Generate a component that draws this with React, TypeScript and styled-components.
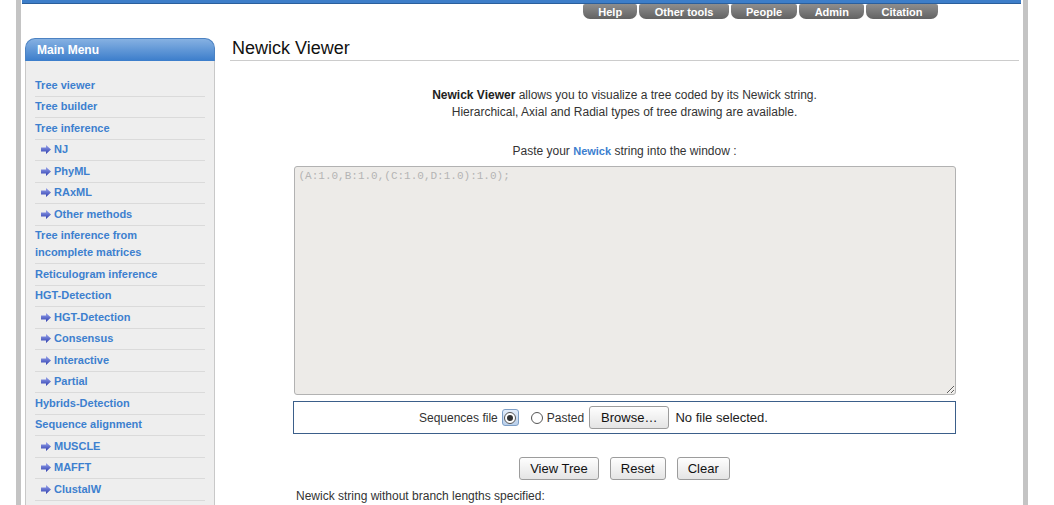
import React from "react";
import styled, { createGlobalStyle } from "styled-components";

const Global = createGlobalStyle`
  html, body { margin: 0; padding: 0; background: #fff; }
  body { font-family: "Liberation Sans", Arial, sans-serif; color: #333; }
  * { box-sizing: border-box; }
`;

const Page = styled.div`
  margin-left: 16px;
  width: 1012px;
  min-height: 505px;
  border-left: 5px solid #c4c4c4;
  border-right: 5px solid #c4c4c4;
  padding: 0 2px 0 1px;
`;

const TopBar = styled.div`
  height: 4px;
  background: #3d7ec9;
  border-bottom: 1px solid #2b5f9c;
`;

const Tabs = styled.nav`
  display: flex;
  gap: 2px;
  padding-left: 561px;
`;

const Tab = styled.a`
  display: block;
  height: 15px;
  line-height: 16px;
  padding: 0 15.3px;
  font-size: 11px;
  font-weight: bold;
  color: #fff;
  text-decoration: none;
  background: linear-gradient(#8e8e8e, #626262);
  border-radius: 2px 2px 7px 7px;
`;

const Main = styled.div`
  display: flex;
  align-items: flex-start;
  margin-top: 19px;
`;

const Sidebar = styled.aside`
  width: 190px;
  margin-left: 3px;
  flex-shrink: 0;
`;

const MenuHeader = styled.div`
  height: 23px;
  line-height: 23px;
  padding-left: 11px;
  color: #fff;
  font-size: 12px;
  font-weight: bold;
  background: linear-gradient(#86b1e2, #3b7dcb);
  border: 1px solid #4c82c2;
  border-bottom: none;
  border-radius: 10px 10px 0 0;
`;

const MenuBody = styled.ul`
  list-style: none;
  margin: 0;
  padding: 14px 9px 0 9px;
  background: #eeeeee;
  border-left: 1px solid #c8c8c8;
  border-right: 1px solid #c8c8c8;
  min-height: 444px;
`;

const MenuItem = styled.li<{ $sub?: boolean }>`
  display: flex;
  align-items: center;
  padding: 1.76px 0 1.76px ${(p) => (p.$sub ? "6px" : "0")};
  border-bottom: 1px solid #dadada;
  font-size: 11px;
  font-weight: bold;
  line-height: 17px;
  color: #3d80cf;
`;

const ArrowIcon = styled.svg`
  width: 10px;
  height: 9px;
  margin-right: 3px;
  flex-shrink: 0;
`;

const Content = styled.main`
  width: 789px;
  margin-left: 15px;
`;

const Title = styled.h1`
  margin: 0;
  padding: 0 0 2px 2px;
  font-size: 18px;
  line-height: 20px;
  font-weight: normal;
  color: #111;
  border-bottom: 1px solid #cccccc;
`;

const Intro = styled.p`
  margin: 25.5px 0 0;
  text-align: center;
  font-size: 12px;
  line-height: 17px;
  color: #333;
  b { color: #222; }
`;

const PasteLine = styled.p`
  margin: 22px 0 0;
  text-align: center;
  font-size: 12px;
  line-height: 17px;
  color: #333;
`;

const Link = styled.span`
  color: #3d80cf;
  font-weight: bold;
  font-size: 11px;
`;

const Area = styled.textarea`
  display: block;
  margin: 6.5px auto 0;
  width: 662px;
  height: 229px;
  padding: 2px 4px;
  background: #edebe8;
  border: 1px solid #b2b2b2;
  border-radius: 3px;
  font-family: "Liberation Mono", "Courier New", monospace;
  font-size: 11px;
  line-height: 14px;
  color: #333;
  &::placeholder { color: #b4b4b4; }
`;

const FileBox = styled.div`
  margin: 6px auto 0;
  width: 663px;
  height: 33px;
  border: 1px solid #3b5f8a;
  display: flex;
  align-items: center;
  padding-left: 125px;
  font-size: 12px;
  color: #333;
`;

const Label = styled.span<{ $gap?: number }>`
  margin-right: ${(p) => p.$gap ?? 4}px;
`;

const FocusRadio = styled.span`
  width: 17px;
  height: 17px;
  margin-right: 12px;
  border: 1px solid #7e9fc6;
  border-radius: 3px;
  background: linear-gradient(#e4eefb, #b9cfea);
  display: flex;
  align-items: center;
  justify-content: center;
`;

const RadioDot = styled.span<{ $on?: boolean }>`
  width: 12px;
  height: 12px;
  border-radius: 50%;
  border: 1px solid #555;
  background: #fff;
  display: flex;
  align-items: center;
  justify-content: center;
  margin-right: ${(p) => (p.$on ? 0 : 4)}px;
  &::after {
    content: "";
    display: ${(p) => (p.$on ? "block" : "none")};
    width: 6px;
    height: 6px;
    border-radius: 50%;
    background: #333;
  }
`;

const Button = styled.button<{ $pad?: number }>`
  height: 23px;
  padding: 0 ${(p) => p.$pad ?? 10}px;
  font-family: "Liberation Sans", Arial, sans-serif;
  font-size: 13px;
  color: #111;
  background: linear-gradient(#fefefe, #e4e4e4);
  border: 1px solid #9c9c9c;
  border-radius: 3px;
`;

const FileName = styled.span`
  margin-left: 6px;
  font-size: 13px;
  color: #222;
`;

const ButtonRow = styled.div`
  margin-top: 23px;
  display: flex;
  justify-content: center;
  gap: 11px;
`;

const Note = styled.p`
  margin: 7.5px 0 0;
  padding-left: 66px;
  font-size: 12px;
  line-height: 17px;
  color: #333;
`;

const Arrow = () => (
  <ArrowIcon viewBox="0 0 10 9">
    <defs>
      <linearGradient id="ag" x1="0" y1="0" x2="0" y2="1">
        <stop offset="0" stopColor="#9aa6ee" />
        <stop offset="1" stopColor="#2c3cae" />
      </linearGradient>
    </defs>
    <path d="M0 2.5H5V0L10 4.5L5 9V6.5H0Z" fill="url(#ag)" />
  </ArrowIcon>
);

const menu: { label: React.ReactNode; sub?: boolean }[] = [
  { label: "Tree viewer" },
  { label: "Tree builder" },
  { label: "Tree inference" },
  { label: "NJ", sub: true },
  { label: "PhyML", sub: true },
  { label: "RAxML", sub: true },
  { label: "Other methods", sub: true },
  { label: (<>Tree inference from<br />incomplete matrices</>) },
  { label: "Reticulogram inference" },
  { label: "HGT-Detection" },
  { label: "HGT-Detection", sub: true },
  { label: "Consensus", sub: true },
  { label: "Interactive", sub: true },
  { label: "Partial", sub: true },
  { label: "Hybrids-Detection" },
  { label: "Sequence alignment" },
  { label: "MUSCLE", sub: true },
  { label: "MAFFT", sub: true },
  { label: "ClustalW", sub: true },
];

export default function App() {
  return (
    <>
      <Global />
      <Page>
        <TopBar />
        <Tabs>
          {["Help", "Other tools", "People", "Admin", "Citation"].map((t) => (
            <Tab key={t}>{t}</Tab>
          ))}
        </Tabs>
        <Main>
          <Sidebar>
            <MenuHeader>Main Menu</MenuHeader>
            <MenuBody>
              {menu.map((m, i) => (
                <MenuItem key={i} $sub={m.sub}>
                  {m.sub && <Arrow />}
                  <span>{m.label}</span>
                </MenuItem>
              ))}
            </MenuBody>
          </Sidebar>
          <Content>
            <Title>Newick Viewer</Title>
            <Intro>
              <b>Newick Viewer</b> allows you to visualize a tree coded by its Newick string.
              <br />
              Hierarchical, Axial and Radial types of tree drawing are available.
            </Intro>
            <PasteLine>
              Paste your <Link>Newick</Link> string into the window :
            </PasteLine>
            <Area placeholder="(A:1.0,B:1.0,(C:1.0,D:1.0):1.0);" />
            <FileBox>
              <Label>Sequences file</Label>
              <FocusRadio>
                <RadioDot $on />
              </FocusRadio>
              <RadioDot />
              <Label $gap={5}>Pasted</Label>
              <Button $pad={11}>Browse…</Button>
              <FileName>No file selected.</FileName>
            </FileBox>
            <ButtonRow>
              <Button>View Tree</Button>
              <Button>Reset</Button>
              <Button>Clear</Button>
            </ButtonRow>
            <Note>Newick string without branch lengths specified:</Note>
          </Content>
        </Main>
      </Page>
    </>
  );
}
